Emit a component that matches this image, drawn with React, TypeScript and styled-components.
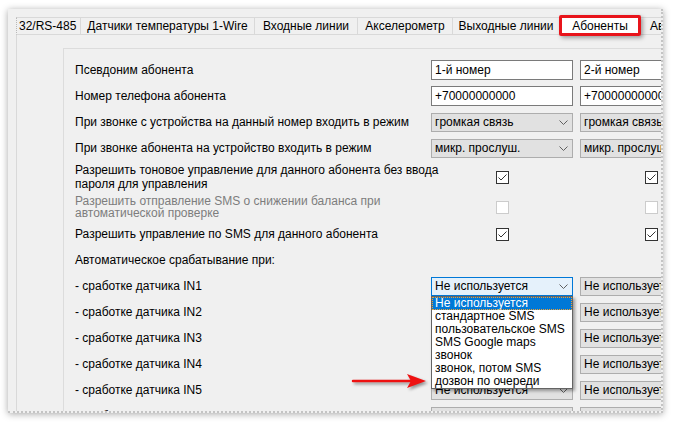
import React from 'react';
import styled, { createGlobalStyle } from 'styled-components';

const GlobalStyle = createGlobalStyle`
  html, body {
    margin: 0;
    padding: 0;
    background: #ffffff;
  }
  body {
    font-family: "Liberation Sans", Arial, sans-serif;
    font-size: 12px;
    color: #000;
  }
`;

const Page = styled.div`
  position: relative;
  width: 679px;
  height: 430px;
  padding: 9px 0 0 8px;
  box-sizing: border-box;
  overflow: hidden;
`;

const Window = styled.div`
  width: 655px;
  height: 404px;
  box-sizing: border-box;
  padding: 8px 0 0 8px;
  background: #f0f0f0;
  box-shadow: 0 1px 7px rgba(0, 0, 0, 0.35);
  border-right: 2px dotted #c4c4c4;
  border-bottom: 2px dotted #c4c4c4;
  overflow: hidden;
  display: flex;
  flex-direction: column;
`;

const TabStrip = styled.div`
  display: flex;
  height: 18px;
  position: relative;
  z-index: 2;
  white-space: nowrap;
`;

const Tab = styled.div<{ $w?: number; $selected?: boolean; $first?: boolean }>`
  position: relative;
  flex: 0 0 ${p => (p.$w ? `${p.$w}px` : 'auto')};
  box-sizing: border-box;
  display: flex;
  align-items: center;
  justify-content: ${p => (p.$first ? 'flex-start' : 'center')};
  padding-left: ${p => (p.$first ? '2px' : '0')};
  border: 1px solid #d9d9d9;
  border-left: ${p => (p.$first ? '1px dotted #b8b8b8' : 'none')};
  background: ${p => (p.$selected ? '#ffffff' : '#f0f0f0')};
  margin-top: ${p => (p.$selected ? '-2px' : '0')};
  height: ${p => (p.$selected ? '21px' : '18px')};
  border-bottom: ${p => (p.$selected ? 'none' : '1px solid #d9d9d9')};
`;

const LastTab = styled.div`
  flex: 1 0 auto;
  box-sizing: border-box;
  padding-left: 9px;
  display: flex;
  align-items: center;
  border-top: 1px solid #d9d9d9;
  border-bottom: 1px solid #d9d9d9;
`;

const Highlight = styled.div`
  position: absolute;
  top: -1px;
  left: -1px;
  right: -1px;
  bottom: 0;
  border: 3px solid #e8141b;
  border-radius: 2px;
  box-shadow: 2px 2px 4px rgba(0, 0, 0, 0.35);
`;

const Panel = styled.div`
  flex: 1;
  margin-top: -1px;
  border-top: 1px solid #d9d9d9;
  border-left: 1px solid #d9d9d9;
  padding: 13px 0 0 46px;
`;

const GroupBox = styled.div`
  border-top: 1px solid #dcdcdc;
  border-left: 1px solid #dcdcdc;
  padding: 8px 0 0 11px;
`;

const Form = styled.div`
  display: grid;
  grid-template-columns: 349px 142px 142px;
  grid-auto-rows: minmax(26px, auto);
  column-gap: 7px;
  align-items: center;
`;

const Label = styled.div<{ $disabled?: boolean; $lh?: number }>`
  white-space: nowrap;
  color: ${p => (p.$disabled ? '#7d7d7d' : '#000')};
  line-height: ${p => (p.$lh ? `${p.$lh}px` : '14px')};
  padding: 2px 0;
`;

const Cell = styled.div<{ $center?: boolean }>`
  position: relative;
  display: flex;
  justify-content: ${p => (p.$center ? 'center' : 'stretch')};
`;

const TextInput = styled.div`
  flex: 1;
  height: 20px;
  box-sizing: border-box;
  border: 1px solid #7a7a7a;
  background: #fff;
  padding: 0 3px;
  display: flex;
  align-items: center;
  white-space: nowrap;
  overflow: hidden;
`;

const ComboBox = styled.div<{ $active?: boolean }>`
  flex: 1;
  height: 19px;
  box-sizing: border-box;
  border: 1px solid ${p => (p.$active ? '#0078d7' : '#adadad')};
  background: ${p => (p.$active ? '#e5f1fb' : '#e1e1e1')};
  padding: 0 4px 0 3px;
  display: flex;
  align-items: center;
  justify-content: space-between;
  white-space: nowrap;
  overflow: hidden;
`;

const Box = styled.div<{ $disabled?: boolean }>`
  width: 13px;
  height: 13px;
  box-sizing: border-box;
  border: 1px solid ${p => (p.$disabled ? '#cccccc' : '#333333')};
  background: #fff;
  display: flex;
  align-items: center;
  justify-content: center;
`;

const DropList = styled.div`
  position: absolute;
  z-index: 5;
  top: 100%;
  left: 0;
  right: 0;
  box-sizing: border-box;
  border: 1px solid #646464;
  background: #fff;
  box-shadow: 2px 2px 3px rgba(0, 0, 0, 0.35);
`;

const DropItem = styled.div<{ $selected?: boolean }>`
  height: 13px;
  line-height: 13px;
  padding-left: 3px;
  white-space: nowrap;
  box-sizing: border-box;
  background: ${p => (p.$selected ? '#0078d7' : 'transparent')};
  color: ${p => (p.$selected ? '#fff' : '#000')};
  outline: ${p => (p.$selected ? '1px dotted #f0a030' : 'none')};
  outline-offset: -1px;
`;

const Arrow = styled.svg`
  position: absolute;
  left: 350px;
  top: 372px;
  z-index: 10;
  filter: drop-shadow(2px 2px 1.5px rgba(0, 0, 0, 0.4));
`;

const Chevron = () => (
  <svg width="9" height="5" viewBox="0 0 9 5">
    <polyline points="0.5,0.5 4.5,4.5 8.5,0.5" fill="none" stroke="#606060" strokeWidth="1" />
  </svg>
);

const Check = ({ checked, disabled }: { checked?: boolean; disabled?: boolean }) => (
  <Box $disabled={disabled}>
    {checked && (
      <svg width="11" height="11" viewBox="0 0 11 11">
        <polyline points="1.5,5.5 4,8 9.5,2.5" fill="none" stroke="#333" strokeWidth="1" />
      </svg>
    )}
  </Box>
);

const Combo = ({ value, active }: { value: string; active?: boolean }) => (
  <ComboBox $active={active}>
    <span>{value}</span>
    <Chevron />
  </ComboBox>
);

const options = [
  'Не используется',
  'стандартное SMS',
  'пользовательское SMS',
  'SMS Google maps',
  'звонок',
  'звонок, потом SMS',
  'дозвон по очереди',
];

const tabs = [
  { label: '32/RS-485', w: 65, first: true },
  { label: 'Датчики температуры 1-Wire', w: 174 },
  { label: 'Входные линии', w: 103 },
  { label: 'Акселерометр', w: 95 },
  { label: 'Выходные линии', w: 107 },
  { label: 'Абоненты', w: 81, selected: true },
];

const sensors = ['IN1', 'IN2', 'IN3', 'IN4', 'IN5', 'IN6'];

export default function App() {
  return (
    <Page>
      <GlobalStyle />
      <Window>
        <TabStrip>
          {tabs.map(t => (
            <Tab key={t.label} $w={t.w} $first={t.first} $selected={t.selected}>
              {t.label}
              {t.selected && <Highlight />}
            </Tab>
          ))}
          <LastTab>Автодозвон</LastTab>
        </TabStrip>
        <Panel>
          <GroupBox>
            <Form>
              <Label>Псевдоним абонента</Label>
              <Cell><TextInput>1-й номер</TextInput></Cell>
              <Cell><TextInput>2-й номер</TextInput></Cell>

              <Label>Номер телефона абонента</Label>
              <Cell><TextInput>+70000000000</TextInput></Cell>
              <Cell><TextInput>+70000000000</TextInput></Cell>

              <Label>При звонке с устройства на данный номер входить в режим</Label>
              <Cell><Combo value="громкая связь" /></Cell>
              <Cell><Combo value="громкая связь" /></Cell>

              <Label>При звонке абонента на устройство входить в режим</Label>
              <Cell><Combo value="микр. прослуш." /></Cell>
              <Cell><Combo value="микр. прослуш." /></Cell>

              <Label $lh={14}>
                Разрешить тоновое управление для данного абонента без ввода
                <br />
                пароля для управления
              </Label>
              <Cell $center><Check checked /></Cell>
              <Cell $center><Check checked /></Cell>

              <Label $disabled $lh={12}>
                Разрешить отправление SMS о снижении баланса при
                <br />
                автоматической проверке
              </Label>
              <Cell $center><Check disabled /></Cell>
              <Cell $center><Check disabled /></Cell>

              <Label>Разрешить управление по SMS для данного абонента</Label>
              <Cell $center><Check checked /></Cell>
              <Cell $center><Check checked /></Cell>

              <Label>Автоматическое срабатывание при:</Label>
              <Cell />
              <Cell />

              {sensors.map((s, i) => (
                <React.Fragment key={s}>
                  <Label>- сработке датчика {s}</Label>
                  <Cell>
                    <Combo value="Не используется" active={i === 0} />
                    {i === 0 && (
                      <DropList>
                        {options.map((o, j) => (
                          <DropItem key={o} $selected={j === 0}>{o}</DropItem>
                        ))}
                      </DropList>
                    )}
                  </Cell>
                  <Cell><Combo value="Не используется" /></Cell>
                </React.Fragment>
              ))}
            </Form>
          </GroupBox>
        </Panel>
      </Window>
      <Arrow width="80" height="20" viewBox="0 0 80 20">
        <line x1="3" y1="9" x2="62" y2="9" stroke="#ee1111" strokeWidth="2.5" strokeLinecap="round" />
        <polygon points="57,2 76,9 57,16 61,9" fill="#ee1111" />
      </Arrow>
    </Page>
  );
}
